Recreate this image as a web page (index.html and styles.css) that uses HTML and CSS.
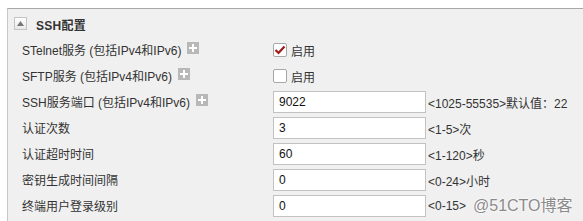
FILE: index.html
```html
<!DOCTYPE html>
<html>
<head>
<meta charset="utf-8">
<link rel="stylesheet" href="styles.css">
</head>
<body>
<div class="panel">
  <div class="panel-head">
    <span class="toggle"><svg width="7" height="5" viewBox="0 0 7 5"><path d="M0 5 L3.5 0 L7 5 Z" fill="#777"/></svg></span>
    <span class="title">SSH配置</span>
  </div>
  <div class="form">
    <div class="label">STelnet服务 (包括IPv4和IPv6)<span class="plus"></span></div>
    <div class="ctrl"><span class="check on"><svg width="12" height="10" viewBox="0 0 12 10"><path d="M1.5 5 L4.5 8 L10.5 1.5" fill="none" stroke="#a01818" stroke-width="2.2"/></svg></span><span class="check-text">启用</span></div>

    <div class="label">SFTP服务 (包括IPv4和IPv6)<span class="plus"></span></div>
    <div class="ctrl"><span class="check"></span><span class="check-text">启用</span></div>

    <div class="label">SSH服务端口 (包括IPv4和IPv6)<span class="plus"></span></div>
    <div class="ctrl"><span class="field">9022</span><span class="hint">&lt;1025-55535&gt;默认值：22</span></div>

    <div class="label">认证次数</div>
    <div class="ctrl"><span class="field">3</span><span class="hint">&lt;1-5&gt;次</span></div>

    <div class="label">认证超时时间</div>
    <div class="ctrl"><span class="field">60</span><span class="hint">&lt;1-120&gt;秒</span></div>

    <div class="label">密钥生成时间间隔</div>
    <div class="ctrl"><span class="field">0</span><span class="hint">&lt;0-24&gt;小时</span></div>

    <div class="label">终端用户登录级别</div>
    <div class="ctrl"><span class="field">0</span><span class="hint">&lt;0-15&gt;</span></div>
  </div>
</div>
<div class="watermark">@51CTO博客</div>
</body>
</html>
```
FILE: styles.css
```css
html, body {
  margin: 0;
  padding: 0;
  background: #fff;
  font-family: "Liberation Sans", "Noto Sans CJK SC", sans-serif;
  font-size: 12px;
  color: #333;
  overflow: hidden;
}
.panel {
  margin: 8px 0 0 7px;
  border-top: 1px solid #a8a8a8;
  border-left: 1px solid #c8c8c8;
  background: #f0f0f0;
  height: 220px;
}
.panel-head {
  display: flex;
  align-items: center;
  height: 24px;
  padding: 2px 0 0 6px;
}
.toggle {
  width: 11px;
  height: 11px;
  border: 1px solid #c4c4c4;
  background: linear-gradient(#ffffff, #e8e8e8);
  display: flex;
  align-items: center;
  justify-content: center;
}
.title {
  margin-left: 9px;
  font-weight: bold;
  color: #333;
  letter-spacing: 0.3px;
  padding-top: 3px;
}
.form {
  display: grid;
  grid-template-columns: 251px 1fr;
  grid-auto-rows: 26px;
  padding: 2px 0 0 14px;
}
.label {
  display: flex;
  align-items: center;
  color: #333;
  padding-bottom: 2px;
}
.plus {
  width: 12px;
  height: 12px;
  margin-left: 6px;
  margin-top: -2px;
  background: #b8b8b8;
  position: relative;
}
.plus::before, .plus::after {
  content: "";
  position: absolute;
  background: #fff;
}
.plus::before { left: 2px; top: 5px; width: 8px; height: 2px; }
.plus::after { left: 5px; top: 2px; width: 2px; height: 8px; }
.ctrl {
  display: flex;
  align-items: center;
}
.check {
  width: 12px;
  height: 12px;
  border: 1px solid #a8a8a8;
  border-radius: 2px;
  background: #fff;
  display: flex;
  align-items: center;
  justify-content: center;
}
.check-text {
  margin-left: 4px;
  color: #333;
}
.field {
  box-sizing: border-box;
  width: 153px;
  height: 22px;
  border: 1px solid #c2c2c2;
  background: #fff;
  color: #111;
  padding: 3px 0 0 5px;
  font-size: 12px;
}
.hint {
  margin-left: 2px;
  color: #333;
}
.watermark {
  position: absolute;
  left: 473px;
  top: 192px;
  font-size: 16px;
  color: #8a8a8a;
  text-shadow: 0 0 2px #fff, 0 0 2px #fff;
}
```
